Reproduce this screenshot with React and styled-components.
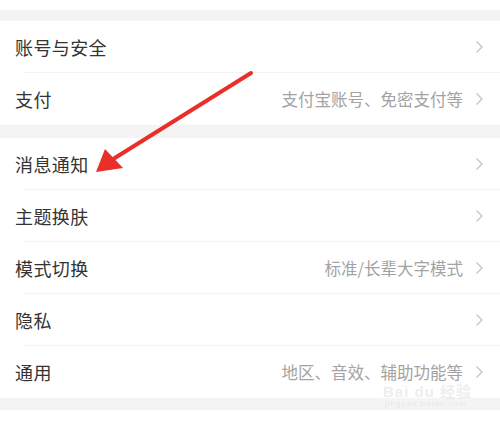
import React from 'react';
import styled, { createGlobalStyle } from 'styled-components';

const GlobalStyle = createGlobalStyle`
  body {
    margin: 0;
    background: #fff;
    font-family: "Noto Sans CJK SC", "Noto Sans", sans-serif;
  }
`;

const Page = styled.div`
  position: relative;
  width: 500px;
  height: 422px;
  overflow: hidden;
  background: #fff;
  padding-top: 10px;
  box-sizing: border-box;
`;

const Gap = styled.div`
  height: ${(p) => p.h}px;
  background: #f4f4f4;
`;

const Group = styled.div`
  background: #fff;
`;

const Row = styled.div`
  position: relative;
  display: flex;
  align-items: center;
  height: 52px;
  padding: 0 16px 0 15px;
  &:not(:last-child)::after {
    content: '';
    position: absolute;
    left: 24px;
    right: 0;
    bottom: 0;
    height: 1px;
    background: #f3f3f3;
  }
`;

const Label = styled.span`
  flex: 1;
  font-size: 18px;
  color: #333;
  letter-spacing: 0.4px;
`;

const Value = styled.span`
  font-size: 16.5px;
  line-height: 20px;
  color: #a3a3a3;
  margin-right: 12px;
`;

const Chevron = () => (
  <svg width="9" height="14" viewBox="0 0 9 14">
    <path d="M1.5 1.5 L7 7 L1.5 12.5" fill="none" stroke="#c6c6c6" strokeWidth="1.4" />
  </svg>
);

const Overlay = styled.svg`
  position: absolute;
  left: 0;
  top: 0;
  pointer-events: none;
`;

const Watermark = styled.div`
  position: absolute;
  left: 383px;
  top: 384px;
  display: flex;
  flex-direction: column;
  align-items: flex-start;
  white-space: nowrap;
  color: rgba(205, 205, 205, 0.35);
  font-family: "Liberation Sans", "Noto Sans CJK SC", sans-serif;
`;

const MarkTop = styled.span`
  font-size: 15px;
  font-weight: bold;
  letter-spacing: 1px;
  line-height: 15px;
`;

const MarkBottom = styled.span`
  font-size: 8px;
  line-height: 10px;
  margin-left: 2px;
  letter-spacing: 1px;
`;

const items1 = [
  { label: '账号与安全' },
  { label: '支付', value: '支付宝账号、免密支付等' },
];

const items2 = [
  { label: '消息通知' },
  { label: '主题换肤' },
  { label: '模式切换', value: '标准/长辈大字模式' },
  { label: '隐私' },
  { label: '通用', value: '地区、音效、辅助功能等' },
];

const renderRows = (list) =>
  list.map((it) => (
    <Row key={it.label}>
      <Label>{it.label}</Label>
      {it.value && <Value>{it.value}</Value>}
      <Chevron />
    </Row>
  ));

export default function App() {
  return (
    <>
      <GlobalStyle />
      <Page>
        <Gap h={11} />
        <Group>{renderRows(items1)}</Group>
        <Gap h={13} />
        <Group>{renderRows(items2)}</Group>
        <Gap h={12} />
        <Watermark>
          <MarkTop>Bai du 经验</MarkTop>
          <MarkBottom>jingyan.baidu.com</MarkBottom>
        </Watermark>
        <Overlay width="500" height="422" viewBox="0 0 500 422">
          <line x1="251" y1="73" x2="110" y2="161" stroke="#ea2f2b" strokeWidth="4" strokeLinecap="round" />
          <polygon points="96,172 105,149 123,168" fill="#ea2f2b" />
        </Overlay>
      </Page>
    </>
  );
}
